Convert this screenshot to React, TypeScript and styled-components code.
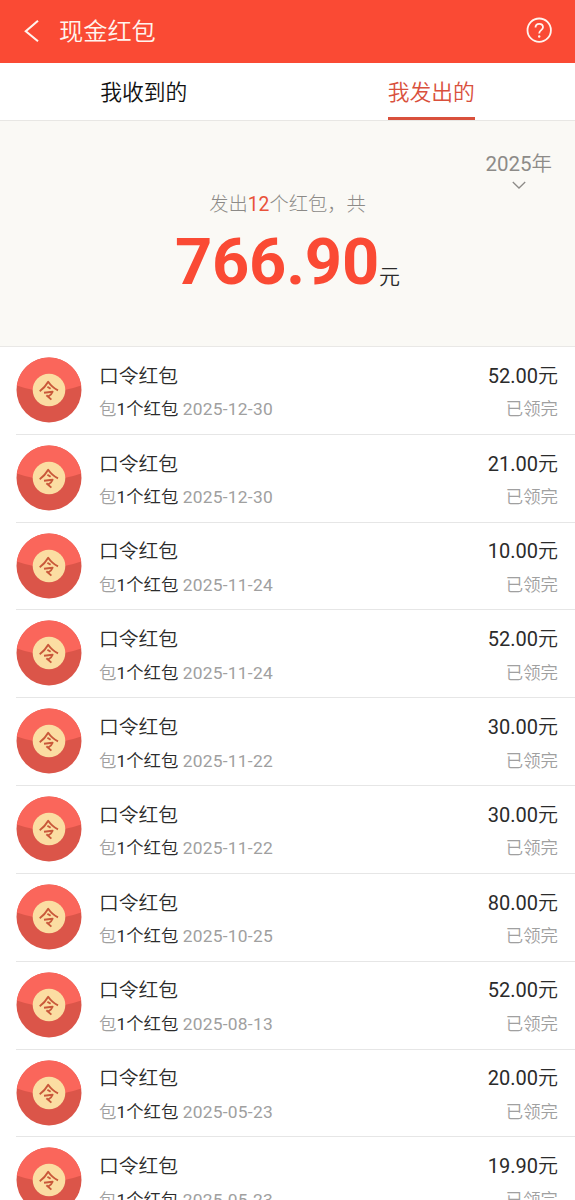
import React from 'react';
import styled, { createGlobalStyle } from 'styled-components';

const GlobalStyle = createGlobalStyle`
  * { box-sizing: border-box; }
  html, body { margin: 0; padding: 0; background: #fff; }
  body {
    height: 1200px;
    overflow: hidden;
    font-family: Roboto, 'Noto Sans CJK SC', sans-serif;
    color: #2b2b2b;
  }
`;

const Page = styled.main`
  display: flex;
  flex-direction: column;
  width: 575px;
  height: 1200px;
  overflow: hidden;
  background: #fff;
`;

const Header = styled.header`
  display: flex;
  align-items: center;
  flex: none;
  height: 63px;
  padding: 0 22px 2px 23px;
  background: #fa4a34;
  color: #fff4ee;
`;

const Title = styled.h1`
  flex: 1;
  margin: 2px 0 0 19px;
  font-size: 24.2px;
  font-weight: 350;
  line-height: 36px;
`;

const Tabs = styled.nav`
  display: flex;
  flex: none;
  height: 58px;
  border-bottom: 1px solid #e8e7e4;
`;

const Tab = styled.div`
  display: flex;
  flex: 1;
  justify-content: center;
`;

const TabLabel = styled.span<{ $active?: boolean }>`
  height: 57px;
  font-size: 21.8px;
  font-weight: 350;
  line-height: 60px;
  color: ${(p) => (p.$active ? '#d9503c' : '#111')};
  border-bottom: ${(p) => (p.$active ? '3px solid #d9503c' : 'none')};
`;

const Summary = styled.section`
  display: flex;
  flex-direction: column;
  align-items: center;
  flex: none;
  height: 226px;
  padding-top: 29px;
  background: #faf9f5;
  border-bottom: 1px solid #e9e8e6;
`;

const YearPicker = styled.div`
  display: flex;
  flex-direction: column;
  align-items: center;
  align-self: flex-end;
  gap: 3px;
  margin-right: 23px;
  font-size: 20.5px;
  font-weight: 350;
  line-height: 28px;
  color: #8d8b88;
`;

const Caption = styled.div`
  margin-top: 1px;
  font-size: 19.3px;
  font-weight: 300;
  line-height: 28px;
  color: #8c8a87;
`;

const Count = styled.span`
  font-weight: 400;
  color: #e9523a;
`;

const Total = styled.div`
  display: flex;
  align-items: baseline;
  height: 76px;
  margin-top: 5px;
  line-height: 76px;
`;

const TotalValue = styled.span`
  font-size: 65px;
  font-weight: 700;
  letter-spacing: -0.2px;
  color: #fa4a34;
`;

const Unit = styled.span`
  font-size: 21px;
  font-weight: 350;
`;

const List = styled.ul`
  flex: none;
  margin: 0;
  padding: 0 0 0 16px;
  list-style: none;
`;

const Row = styled.li`
  display: flex;
  height: 87.83px;
  padding: 10px 17px 0 0;
  border-bottom: 1px solid #e6e6e6;
`;

const Details = styled.div`
  flex: 1;
  padding: 4.7px 0 0 17px;
`;

const Result = styled.div`
  padding-top: 4.7px;
  text-align: right;
`;

const Primary = styled.div`
  font-size: 19.8px;
  font-weight: 350;
  line-height: 29px;
`;

const Amount = styled(Primary)`
  font-size: 20px;
`;

const Secondary = styled.div`
  margin-top: 4.6px;
  font-size: 17.4px;
  font-weight: 350;
  line-height: 29px;
  color: #a0a0a0;
  white-space: nowrap;
`;

const Strong = styled.span`
  color: #2b2b2b;
`;

const Digits = styled.span`
  font-weight: 380;
`;

const PacketDate = styled(Digits)`
  letter-spacing: 0.25px;
`;

const BackIcon = () => (
  <svg width="17" height="24" viewBox="0 0 17 24" fill="none" stroke="currentColor" strokeWidth="2.1">
    <path d="M15 1.8 2.8 12.2 15 22.3" />
  </svg>
);

const HelpIcon = () => (
  <svg width="27" height="27" viewBox="0 0 27 27" fill="none" stroke="currentColor" strokeWidth="1.8">
    <circle cx="13.2" cy="13.2" r="11.7" />
    <path d="M9.5 10.6c0-2.4 1.4-3.8 3.7-3.8s3.8 1.4 3.8 3.5c0 2.8-3.8 3-3.8 6.1" />
    <circle cx="13.2" cy="19.5" r="1.2" fill="currentColor" stroke="none" />
  </svg>
);

const ChevronDown = () => (
  <svg width="14" height="9" viewBox="0 0 14 9" fill="none" stroke="currentColor" strokeWidth="1.3">
    <path d="m.8 1 6.2 6L13.2 1" />
  </svg>
);

const PacketIcon = () => (
  <svg width="66" height="66" viewBox="0 0 66 66">
    <circle cx="33" cy="33" r="32.5" fill="#db5549" />
    <path d="M.8 28.5a32.5 32.5 0 0 1 64.4 0Q50 34 33 34T.8 28.5Z" fill="#fa665b" />
    <circle cx="33" cy="33" r="16.3" fill="#fbdda2" />
    <g fill="none" stroke="#c9583a" strokeWidth="1.9" strokeLinejoin="round">
      <path d="M23.7 34.2Q29 30.5 32.2 24.8Q36 30.5 42 33.3" />
      <path d="m31.4 29.8 3.2 2" />
      <path d="M28 35.8 36.6 34.7q-1 3-4.6 5" />
      <path d="m30.4 38.3 5 4.3" />
    </g>
  </svg>
);

const packets = [
  { amount: '52.00', date: '2025-12-30' },
  { amount: '21.00', date: '2025-12-30' },
  { amount: '10.00', date: '2025-11-24' },
  { amount: '52.00', date: '2025-11-24' },
  { amount: '30.00', date: '2025-11-22' },
  { amount: '30.00', date: '2025-11-22' },
  { amount: '80.00', date: '2025-10-25' },
  { amount: '52.00', date: '2025-08-13' },
  { amount: '20.00', date: '2025-05-23' },
  { amount: '19.90', date: '2025-05-23' },
];

export default function App() {
  return (
    <Page>
      <GlobalStyle />
      <Header>
        <BackIcon />
        <Title>现金红包</Title>
        <HelpIcon />
      </Header>
      <Tabs>
        <Tab><TabLabel>我收到的</TabLabel></Tab>
        <Tab><TabLabel $active>我发出的</TabLabel></Tab>
      </Tabs>
      <Summary>
        <YearPicker>
          <span><Digits>2025</Digits>年</span>
          <ChevronDown />
        </YearPicker>
        <Caption>发出<Count>12</Count>个红包，共</Caption>
        <Total>
          <TotalValue>766.90</TotalValue>
          <Unit>元</Unit>
        </Total>
      </Summary>
      <List>
        {packets.map((p, i) => (
          <Row key={i}>
            <PacketIcon />
            <Details>
              <Primary>口令红包</Primary>
              <Secondary>包<Strong><Digits>1</Digits>个红包</Strong> <PacketDate>{p.date}</PacketDate></Secondary>
            </Details>
            <Result>
              <Amount><Digits>{p.amount}</Digits>元</Amount>
              <Secondary>已领完</Secondary>
            </Result>
          </Row>
        ))}
      </List>
    </Page>
  );
}
